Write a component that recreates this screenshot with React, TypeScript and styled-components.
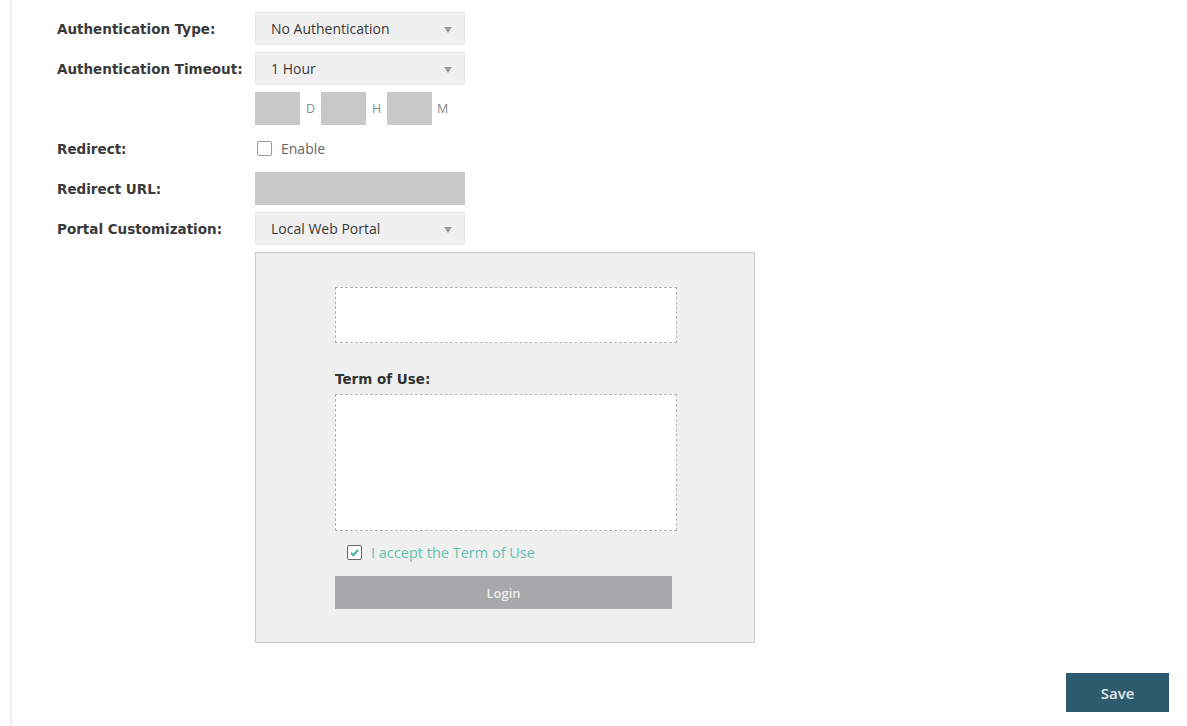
import styled, { createGlobalStyle } from 'styled-components';

const GlobalStyle = createGlobalStyle`
    html, body {
        margin: 0;
        padding: 0;
        background: #ffffff;
    }
    body {
        font-family: 'Open Sans', 'DejaVu Sans', sans-serif;
        color: #333333;
    }
`;

const Page = styled.div`
    margin-left: 10px;
    min-height: 100vh;
    box-sizing: border-box;
    border-left: 2px solid #eeeeee;
    padding: 12px 18px 0 45px;
    display: flex;
    flex-direction: column;
`;

const Form = styled.div`
    display: grid;
    grid-template-columns: 198px auto;
    grid-auto-rows: 33px;
    row-gap: 7px;
    align-items: center;
`;

const Label = styled.div`
    font-family: 'DejaVu Sans', Verdana, sans-serif;
    font-weight: bold;
    font-size: 13.5px;
    color: #3a3a3a;
    grid-column: 1;
    white-space: nowrap;
`;

const Field = styled.div`
    grid-column: 2;
    display: flex;
    align-items: center;
    height: 100%;
`;

const Select = styled.div`
    box-sizing: border-box;
    width: 210px;
    height: 33px;
    background: #f0f0f0;
    border: 1px solid #e6e6e6;
    display: flex;
    align-items: center;
    justify-content: space-between;
    padding: 0 12px 0 15px;
    font-size: 14px;
    color: #3a3a3a;
`;

const Arrow = styled.span`
    width: 0;
    height: 0;
    border-left: 4px solid transparent;
    border-right: 4px solid transparent;
    border-top: 6px solid #9a9a9a;
    margin-top: 3px;
`;

const GreyBox = styled.div<{ $width: number }>`
    width: ${({ $width }) => $width}px;
    height: 33px;
    background: #c8c8c8;
`;

const Unit = styled.span`
    width: 21px;
    text-align: center;
    font-size: 12.5px;
    color: #8a8a8a;
`;

const CheckLabel = styled.label`
    display: flex;
    align-items: center;
    gap: 9px;
    font-size: 14px;
    color: #666666;
    padding-left: 2px;
`;

const Box = styled.span<{ $checked?: boolean }>`
    box-sizing: border-box;
    width: 15px;
    height: 15px;
    border: 1px solid ${({ $checked }) => ($checked ? '#666666' : '#9a9a9a')};
    border-radius: 2px;
    background: #ffffff;
    display: flex;
    align-items: center;
    justify-content: center;
`;

const Preview = styled.div`
    grid-column: 2;
    grid-row: span 10;
    align-self: start;
    box-sizing: border-box;
    width: 500px;
    height: 391px;
    background: #f0f0f0;
    border: 1px solid #c9c9c9;
    padding: 34px 0 0 79px;
    display: flex;
    flex-direction: column;
    align-items: flex-start;
`;

const Dashed = styled.div<{ $height: number }>`
    box-sizing: border-box;
    width: 342px;
    height: ${({ $height }) => $height}px;
    background: #ffffff;
    border: 1px dashed #b5b5b5;
`;

const Heading = styled.div`
    font-family: 'DejaVu Sans', Verdana, sans-serif;
    font-weight: bold;
    font-size: 13.5px;
    line-height: 18px;
    color: #333333;
    margin: 27px 0 6px;
`;

const Accept = styled.label`
    display: flex;
    align-items: center;
    gap: 9px;
    margin: 13px 0 0 12px;
    height: 16px;
    font-size: 14.5px;
    color: #5ec4ae;
`;

const LoginButton = styled.div`
    width: 337px;
    height: 33px;
    margin-top: 16px;
    background: #a7a8aa;
    color: #ececec;
    font-size: 13px;
    font-weight: 600;
    display: flex;
    align-items: center;
    justify-content: center;
`;

const Footer = styled.div`
    display: flex;
    justify-content: flex-end;
    margin-top: 28px;
`;

const SaveButton = styled.button`
    width: 103px;
    height: 39px;
    border: none;
    background: #2d5b6d;
    color: #e4ecee;
    font-family: 'Open Sans', sans-serif;
    font-size: 15px;
    font-weight: 600;
    cursor: pointer;
`;

const Check = () => (
    <svg width="11" height="11" viewBox="0 0 11 11">
        <path d="M2 5.8 L4.4 8.2 L9 2.8" fill="none" stroke="#3fb39b" strokeWidth="2" />
    </svg>
);

export default function App() {
    return (
        <>
            <GlobalStyle />
            <Page>
                <Form>
                    <Label>Authentication Type:</Label>
                    <Field>
                        <Select>
                            No Authentication
                            <Arrow />
                        </Select>
                    </Field>

                    <Label>Authentication Timeout:</Label>
                    <Field>
                        <Select>
                            1 Hour
                            <Arrow />
                        </Select>
                    </Field>

                    <Field>
                        <GreyBox $width={45} />
                        <Unit>D</Unit>
                        <GreyBox $width={45} />
                        <Unit>H</Unit>
                        <GreyBox $width={45} />
                        <Unit>M</Unit>
                    </Field>

                    <Label>Redirect:</Label>
                    <Field>
                        <CheckLabel>
                            <Box />
                            Enable
                        </CheckLabel>
                    </Field>

                    <Label>Redirect URL:</Label>
                    <Field>
                        <GreyBox $width={210} />
                    </Field>

                    <Label>Portal Customization:</Label>
                    <Field>
                        <Select>
                            Local Web Portal
                            <Arrow />
                        </Select>
                    </Field>

                    <Preview>
                        <Dashed $height={56} />
                        <Heading>Term of Use:</Heading>
                        <Dashed $height={137} />
                        <Accept>
                            <Box $checked>
                                <Check />
                            </Box>
                            I accept the Term of Use
                        </Accept>
                        <LoginButton>Login</LoginButton>
                    </Preview>
                </Form>
                <Footer>
                    <SaveButton>Save</SaveButton>
                </Footer>
            </Page>
        </>
    );
}
